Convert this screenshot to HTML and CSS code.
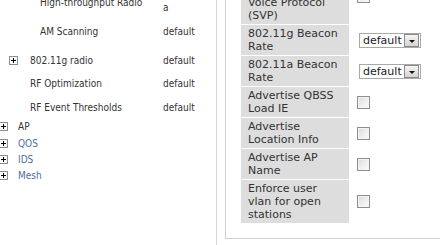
FILE: index.html
```html
<!DOCTYPE html>
<html>
<head>
<meta charset="utf-8">
<link rel="stylesheet" href="styles.css">
</head>
<body>
<div class="page">
  <div class="left">
    <div class="tree">
      <div class="row r-ht"><span class="name lv2">High-throughput Radio</span><span class="val val-low">a</span></div>
      <div class="row r-am"><span class="name lv2">AM Scanning</span><span class="val">default</span></div>
      <div class="row r-g"><span class="name lv1"><svg class="plus" width="9" height="9" viewBox="0 0 9 9"><rect x="0.5" y="0.5" width="8" height="8" fill="#fff" stroke="#8c8c8c"/><rect x="2" y="4" width="5" height="1" fill="#000"/><rect x="4" y="2" width="1" height="5" fill="#000"/></svg>802.11g radio</span><span class="val">default</span></div>
      <div class="row r-rfo"><span class="name lv1 noicon">RF Optimization</span><span class="val">default</span></div>
      <div class="row r-rfe"><span class="name lv1 noicon">RF Event Thresholds</span><span class="val">default</span></div>
      <div class="row r-ap"><span class="name lv0"><svg class="plus" width="9" height="9" viewBox="0 0 9 9"><rect x="0.5" y="0.5" width="8" height="8" fill="#fff" stroke="#8c8c8c"/><rect x="2" y="4" width="5" height="1" fill="#000"/><rect x="4" y="2" width="1" height="5" fill="#000"/></svg>AP</span></div>
      <div class="row r-q"><span class="name lv0 link"><svg class="plus" width="9" height="9" viewBox="0 0 9 9"><rect x="0.5" y="0.5" width="8" height="8" fill="#fff" stroke="#8c8c8c"/><rect x="2" y="4" width="5" height="1" fill="#000"/><rect x="4" y="2" width="1" height="5" fill="#000"/></svg>QOS</span></div>
      <div class="row r-i"><span class="name lv0 link"><svg class="plus" width="9" height="9" viewBox="0 0 9 9"><rect x="0.5" y="0.5" width="8" height="8" fill="#fff" stroke="#8c8c8c"/><rect x="2" y="4" width="5" height="1" fill="#000"/><rect x="4" y="2" width="1" height="5" fill="#000"/></svg>IDS</span></div>
      <div class="row r-m"><span class="name lv0 link"><svg class="plus" width="9" height="9" viewBox="0 0 9 9"><rect x="0.5" y="0.5" width="8" height="8" fill="#fff" stroke="#8c8c8c"/><rect x="2" y="4" width="5" height="1" fill="#000"/><rect x="4" y="2" width="1" height="5" fill="#000"/></svg>Mesh</span></div>
    </div>
  </div>
  <div class="right">
    <div class="box">
      <div class="table">
        <div class="trow"><div class="label four">Enable Spectralink Voice Protocol (SVP)</div><div class="cell"><span class="check"></span></div></div>
        <div class="trow"><div class="label">802.11g Beacon Rate</div><div class="cell"><span class="select"><span class="sel-text">default</span><span class="sel-btn"><span class="tri"></span></span></span></div></div>
        <div class="trow"><div class="label">802.11a Beacon Rate</div><div class="cell"><span class="select"><span class="sel-text">default</span><span class="sel-btn"><span class="tri"></span></span></span></div></div>
        <div class="trow"><div class="label">Advertise QBSS Load IE</div><div class="cell"><span class="check"></span></div></div>
        <div class="trow"><div class="label">Advertise Location Info</div><div class="cell"><span class="check"></span></div></div>
        <div class="trow"><div class="label">Advertise AP Name</div><div class="cell"><span class="check"></span></div></div>
        <div class="trow"><div class="label">Enforce user vlan for open stations</div><div class="cell"><span class="check"></span></div></div>
      </div>
    </div>
  </div>
</div>
</body>
</html>
```
FILE: styles.css
```css
html, body {
  margin: 0;
  padding: 0;
  background: #fff;
}
body {
  width: 440px;
  height: 245px;
  overflow: hidden;
}
.page {
  display: flex;
  align-items: flex-start;
  height: 245px;
  overflow: hidden;
}
.left {
  flex: none;
  width: 216px;
  height: 245px;
  border-right: 1px solid #d6d6d6;
  overflow: hidden;
  font-family: "DejaVu Sans Condensed", "DejaVu Sans", sans-serif;
  font-stretch: condensed;
  font-size: 10px;
  line-height: 12px;
  color: #333;
}
.tree {
  margin-top: -3px;
}
.row {
  display: flex;
  align-items: flex-start;
  height: 12px;
}
.name {
  flex: none;
  width: 163px;
  box-sizing: border-box;
  display: flex;
  align-items: center;
  white-space: nowrap;
}
.lv2 { padding-left: 40px; }
.lv1 { padding-left: 9px; }
.lv1.noicon { padding-left: 30px; }
.lv0 { padding-left: 0; margin-left: -1px; }
.lv1 .plus { margin-right: 12px; }
.lv0 .plus { margin-right: 10px; }
.plus {
  flex: none;
  display: block;
  margin-top: -1px;
}
.link { color: #4f6d9e; }
.val { white-space: nowrap; }
.val-low { padding-top: 5px; }
.r-ht { height: 17px; }
.r-am { margin-top: 12px; }
.r-g { margin-top: 17px; }
.r-rfo { margin-top: 11px; }
.r-rfe { margin-top: 12px; }
.r-ap { margin-top: 7px; }
.r-q { margin-top: 5px; }
.r-i { margin-top: 4px; }
.r-m { margin-top: 4px; }

.right {
  flex: none;
  width: 260px;
  margin-top: -32px;
}
.box {
  margin-left: 8px;
  border-left: 1px solid #d0d0d0;
  border-bottom: 1px solid #d0d0d0;
  padding: 0 0 15px 15px;
}
.table {
  display: flex;
  flex-direction: column;
  gap: 1px;
  font-family: "DejaVu Sans", Verdana, sans-serif;
  font-size: 11px;
  line-height: 13px;
  color: #333;
}
.trow {
  display: flex;
  align-items: stretch;
}
.label {
  flex: none;
  width: 108px;
  box-sizing: border-box;
  padding: 2px 9px 2px 7px;
  background: #dddddd;
}
.cell {
  display: flex;
  align-items: center;
}
.check {
  display: block;
  width: 11px;
  height: 11px;
  margin-left: 8px;
  border: 1px solid #8e8e8e;
  background: linear-gradient(135deg, #d9d9d9 0%, #efefef 55%, #fbfbfb 100%);
  box-shadow: inset 0 0 0 1px #f4f4f4;
}
.select {
  display: flex;
  align-items: center;
  margin-left: 10px;
  width: 59px;
  height: 13px;
  border: 1px solid #a9a9a9;
  background: #fff;
  padding: 0 1px 0 0;
}
.sel-text {
  flex: 1;
  padding-left: 3px;
  line-height: 13px;
  font-size: 11px;
  color: #222;
}
.sel-btn {
  flex: none;
  width: 13px;
  height: 11px;
  border: 1px solid #8a8a8a;
  background: linear-gradient(#f6f6f6, #d4d4d4);
  display: flex;
  justify-content: center;
  align-items: flex-end;
}
.tri {
  display: block;
  width: 0;
  height: 0;
  margin-bottom: 3px;
  border-left: 3px solid transparent;
  border-right: 3px solid transparent;
  border-top: 3px solid #111;
}
```
